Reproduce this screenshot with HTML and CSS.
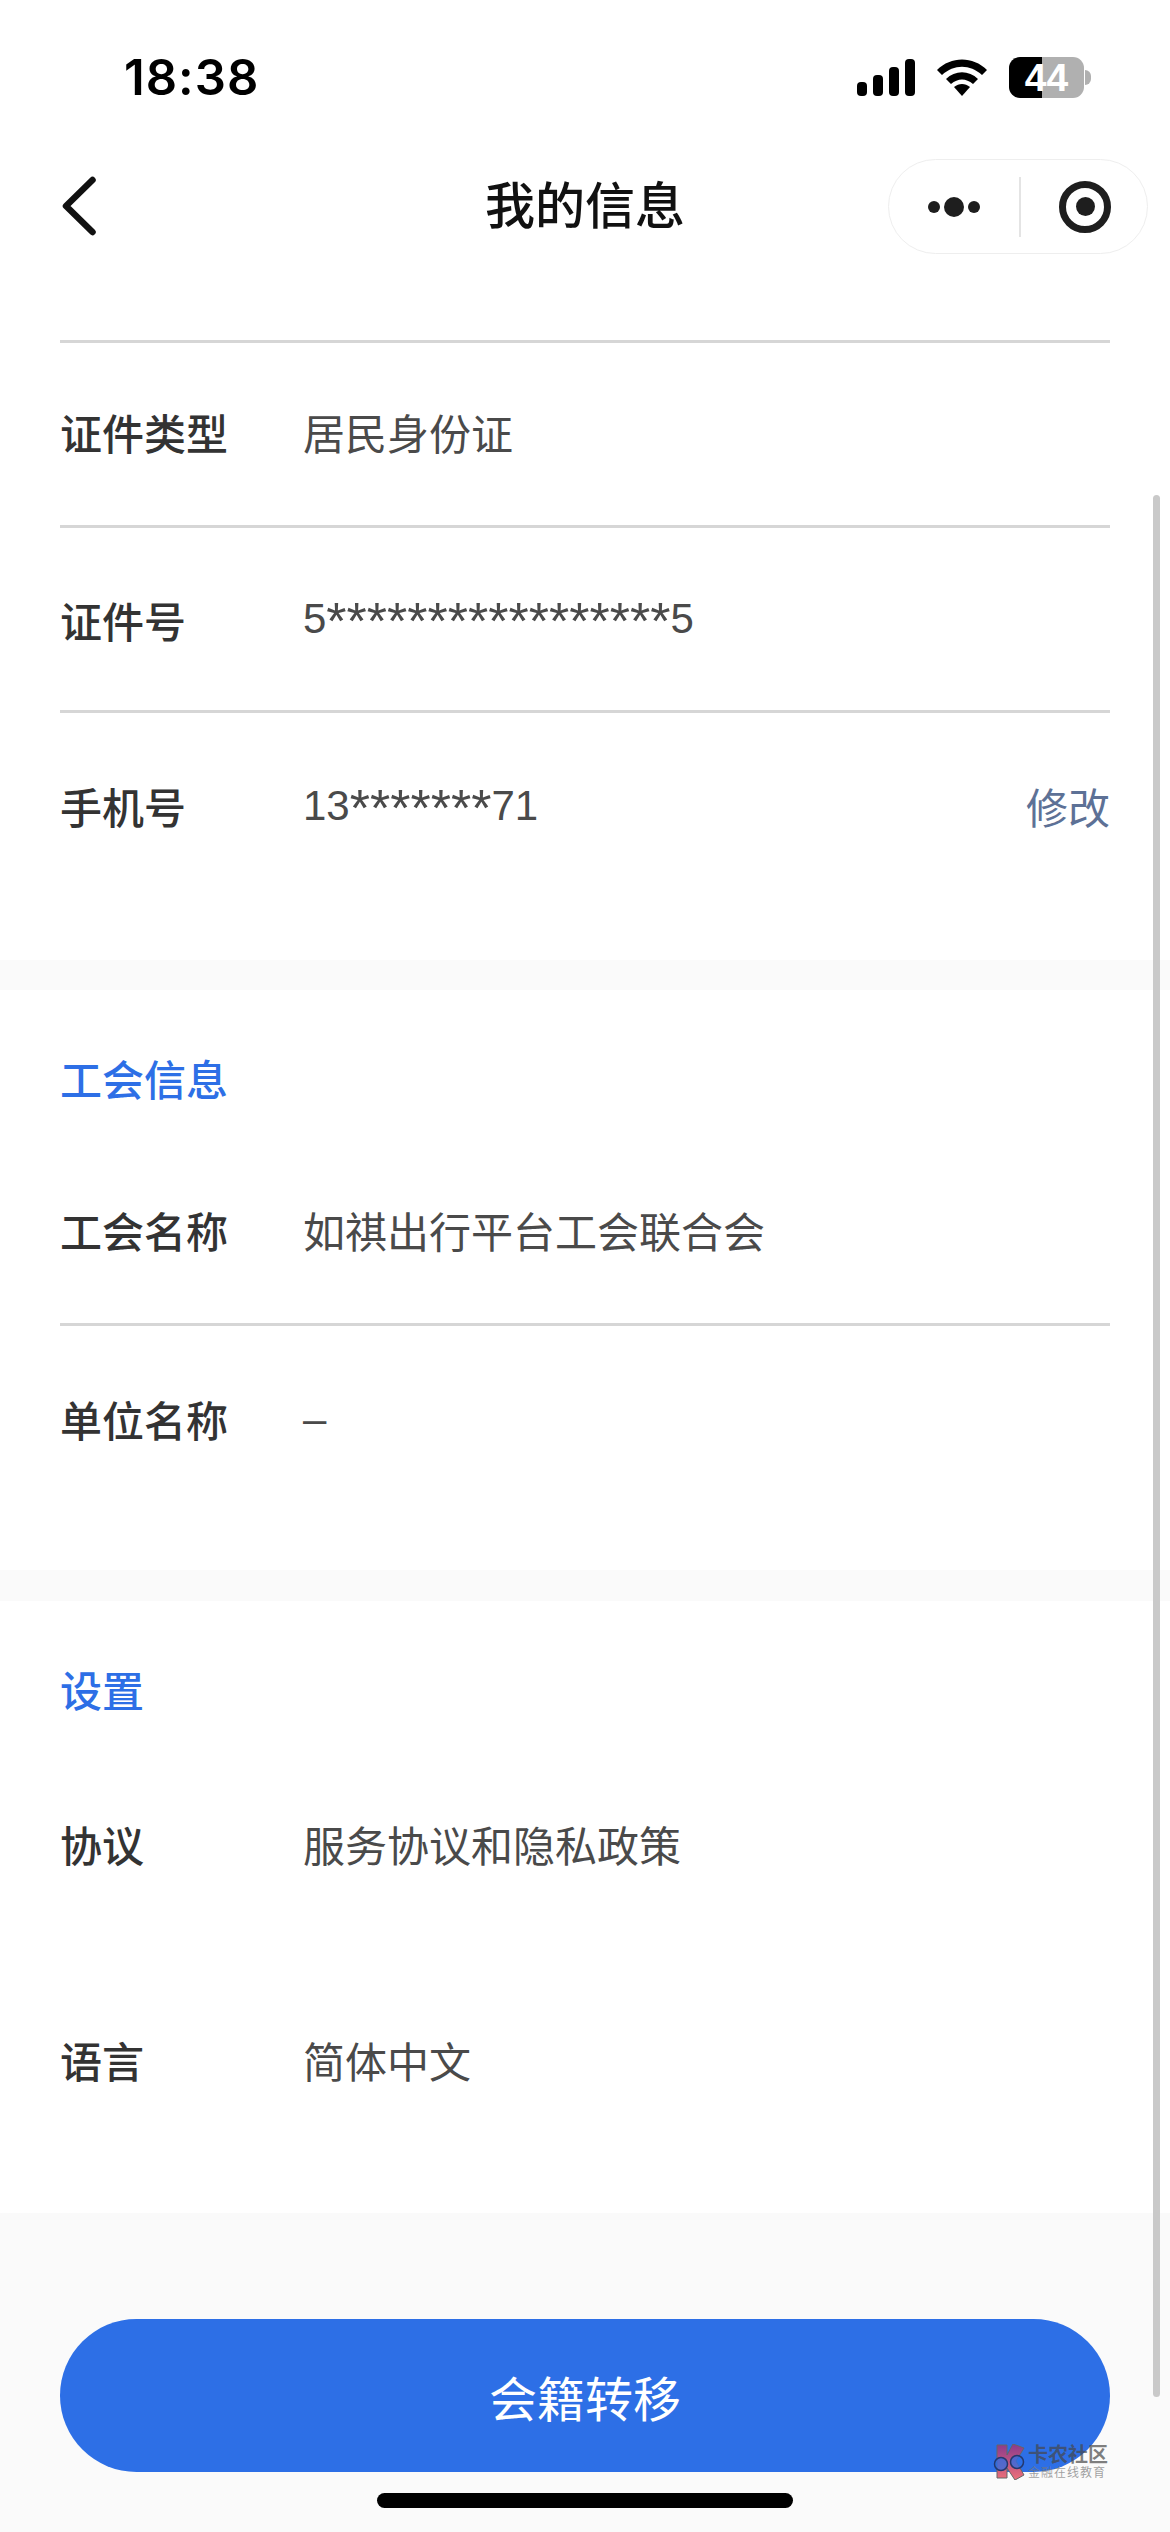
FILE: index.html
```html
<!DOCTYPE html>
<html>
<head>
    <meta charset="utf-8">
    <title>我的信息</title>
    <link rel="stylesheet" href="styles.css">
</head>
<body>
    <div class="status-bar">
        <span class="time">18:38</span>
        <div class="status-icons">
            <svg class="signal" width="58" height="37" viewBox="0 0 58 37">
                <rect x="0" y="23" width="10" height="14" rx="4"/>
                <rect x="16" y="16" width="10" height="21" rx="4"/>
                <rect x="32" y="8" width="10" height="29" rx="4"/>
                <rect x="48" y="0" width="10" height="37" rx="4"/>
            </svg>
            <svg class="wifi" width="50" height="37" viewBox="0 0 50 37">
                <path d="M0 11 C14 -3 36 -3 50 11 L45 16 C33 5 17 5 5 16 Z"/>
                <path d="M9 20 C18 11 32 11 41 20 L36 25 C29 19 21 19 14 25 Z"/>
                <path d="M17 28 C22 24 28 24 33 28 L25 37 Z"/>
            </svg>
            <div class="battery"><span class="battery-level">44</span><span class="battery-nub"></span></div>
        </div>
    </div>

    <div class="nav-bar">
        <svg class="back" width="36" height="60" viewBox="0 0 36 60">
            <path d="M32.5 4 L6 30 L32.5 56" fill="none" stroke="#111" stroke-width="6.5" stroke-linecap="round" stroke-linejoin="round"/>
        </svg>
        <h1 class="nav-title">我的信息</h1>
        <div class="capsule">
            <div class="capsule-dots">
                <span class="dot"></span>
                <span class="dot dot-big"></span>
                <span class="dot"></span>
            </div>
            <span class="capsule-line"></span>
            <div class="capsule-target"><span class="target-core"></span></div>
        </div>
    </div>

    <div class="section section-id">
        <div class="row row-line row-raised">
            <span class="label">证件类型</span>
            <span class="value">居民身份证</span>
        </div>
        <div class="row row-line">
            <span class="label">证件号</span>
            <span class="value">5<span class="mask">*****************</span>5</span>
        </div>
        <div class="row">
            <span class="label">手机号</span>
            <span class="value">13<span class="mask">*******</span>71</span>
            <span class="edit">修改</span>
        </div>
    </div>

    <div class="section section-union">
        <h2 class="section-title">工会信息</h2>
        <div class="row row-line row-raised">
            <span class="label">工会名称</span>
            <span class="value">如祺出行平台工会联合会</span>
        </div>
        <div class="row">
            <span class="label">单位名称</span>
            <span class="value">–</span>
        </div>
    </div>

    <div class="section section-settings">
        <h2 class="section-title">设置</h2>
        <div class="row row-tall">
            <span class="label">协议</span>
            <span class="value">服务协议和隐私政策</span>
        </div>
        <div class="row row-tall">
            <span class="label">语言</span>
            <span class="value">简体中文</span>
        </div>
    </div>

    <div class="footer">
        <button class="transfer-button">会籍转移</button>
        <div class="home-bar"></div>
    </div>

    <div class="scrollbar"></div>

    <div class="watermark">
        <svg class="watermark-logo" width="33" height="36" viewBox="0 0 33 36">
            <defs>
                <linearGradient id="logo-fill" x1="0" y1="0" x2="0" y2="1">
                    <stop offset="0" stop-color="#8a3a8c"/>
                    <stop offset="1" stop-color="#ee7078"/>
                </linearGradient>
            </defs>
            <path d="M5 1 L15 1 L15 11 L21 0 L32 4 L24 17 L32 31 L23 36 L15 24 L15 34 L5 34 Z" fill="url(#logo-fill)" stroke="#666" stroke-width="1"/>
            <circle cx="9" cy="20" r="6.5" fill="#2d6fe6" fill-opacity="0.75" stroke="#24386e" stroke-width="1.5"/>
            <circle cx="25" cy="18" r="6.5" fill="#2d6fe6" fill-opacity="0.75" stroke="#24386e" stroke-width="1.5"/>
        </svg>
        <div class="watermark-text">
            <span class="watermark-name">卡农社区</span>
            <span class="watermark-sub">金融在线教育</span>
        </div>
    </div>
</body>
</html>
```

FILE: styles.css
```css
body, html {
    margin: 0;
    padding: 0;
    width: 1170px;
    height: 2532px;
    overflow: hidden;
    background: #fafafa;
    font-family: "Liberation Sans", "Noto Sans CJK SC", sans-serif;
}

body {
    position: relative;
}

/* status bar */
.status-bar {
    height: 100px;
    box-sizing: border-box;
    padding: 57px 86px 0 124px;
    display: flex;
    justify-content: space-between;
    align-items: flex-start;
    background: #fff;
}

.time {
    font-family: Inter, "Liberation Sans", sans-serif;
    font-size: 49px;
    line-height: 41px;
    font-weight: 600;
    letter-spacing: 1px;
    color: #000;
}

.status-icons {
    display: flex;
    align-items: center;
    gap: 22px;
}

.signal, .wifi {
    fill: #000;
}

.battery {
    position: relative;
    width: 75px;
    height: 41px;
    border-radius: 11px;
    background: linear-gradient(to right, #000 33px, #b0b0b0 33px);
    display: flex;
    align-items: center;
    justify-content: center;
}

.battery-level {
    color: #fff;
    font-size: 39px;
    font-weight: bold;
}

.battery-nub {
    position: absolute;
    right: -7px;
    top: 13px;
    width: 6px;
    height: 15px;
    border-radius: 0 8px 8px 0;
    background: #b0b0b0;
}

/* nav bar */
.nav-bar {
    height: 240px;
    box-sizing: border-box;
    padding: 59px 22px 0;
    display: grid;
    grid-template-columns: minmax(0, 1fr) auto minmax(0, 1fr);
    align-items: start;
    background: #fff;
}

.back {
    margin: 17px 0 0 38px;
}

.nav-title {
    margin: 17px 0 0;
    font-size: 50px;
    line-height: 62px;
    font-weight: 500;
    color: #111;
}

.capsule {
    justify-self: end;
    width: 260px;
    height: 95px;
    box-sizing: border-box;
    border: 1px solid #eee;
    border-radius: 48px;
    display: flex;
    align-items: center;
}

.capsule-dots {
    width: 130px;
    display: flex;
    align-items: center;
    justify-content: center;
    gap: 4px;
}

.dot {
    width: 12px;
    height: 12px;
    border-radius: 50%;
    background: #1e1e1e;
}

.dot-big {
    width: 20px;
    height: 20px;
}

.capsule-line {
    width: 2px;
    height: 60px;
    background: #e4e4e4;
}

.capsule-target {
    width: 52px;
    height: 52px;
    box-sizing: border-box;
    margin-left: 38px;
    border: 7px solid #1e1e1e;
    border-radius: 50%;
    display: flex;
    align-items: center;
    justify-content: center;
}

.target-core {
    width: 19px;
    height: 19px;
    border-radius: 50%;
    background: #1e1e1e;
}

/* sections */
.section {
    box-sizing: border-box;
    padding: 0 60px;
    background: #fff;
}

.section-id {
    height: 620px;
    border-top: 3px solid transparent;
}

.section-id::before {
    content: "";
    display: block;
    height: 3px;
    margin-top: -3px;
    background: #d6d6d6;
}

.section-union {
    height: 580px;
    margin-top: 30px;
    padding-top: 62px;
}

.section-union .section-title {
    margin-bottom: 29px;
}

.section-settings {
    height: 612px;
    margin-top: 31px;
    padding-top: 62px;
}

.section-settings .section-title {
    margin-bottom: 12px;
}

.section-title {
    margin: 0;
    font-size: 42px;
    line-height: 60px;
    font-weight: 500;
    color: #2d6fe6;
}

.row {
    height: 185px;
    box-sizing: border-box;
    display: flex;
    align-items: center;
    font-size: 42px;
}

.row-raised {
    padding-bottom: 6px;
}

.row-line {
    border-bottom: 3px solid #d6d6d6;
}

.row-tall {
    height: 216px;
}

.label {
    width: 243px;
    flex-shrink: 0;
    font-weight: 500;
    color: #333;
}

.value {
    flex: 1;
    color: #4a4a4a;
}

/* the masked stars are much wider than the digits around them */
.mask {
    font-size: 52px;
    line-height: 0;
    vertical-align: -6px;
}

.edit {
    color: #5d7196;
}

/* footer */
.footer {
    height: 319px;
    box-sizing: border-box;
    padding: 106px 60px 0;
    background: #fafafa;
}

.transfer-button {
    display: block;
    width: 100%;
    height: 153px;
    border: none;
    border-radius: 77px;
    background: #2d6fe6;
    color: #fff;
    font-family: inherit;
    font-size: 48px;
}

.home-bar {
    width: 416px;
    height: 15px;
    margin: 21px auto 0;
    border-radius: 8px;
    background: #000;
}

/* overlays */
.scrollbar {
    position: absolute;
    left: 1153px;
    top: 495px;
    width: 7px;
    height: 1902px;
    border-radius: 4px;
    background: #c9c9c9;
}

.watermark {
    position: absolute;
    left: 992px;
    top: 2444px;
    display: flex;
    align-items: center;
    gap: 3px;
}

.watermark-text {
    display: flex;
    flex-direction: column;
}

.watermark-name {
    font-size: 20px;
    line-height: 22px;
    font-weight: bold;
    color: rgba(70, 70, 70, 0.7);
}

.watermark-sub {
    font-size: 12px;
    line-height: 14px;
    letter-spacing: 1px;
    color: rgba(120, 120, 120, 0.7);
}
```
